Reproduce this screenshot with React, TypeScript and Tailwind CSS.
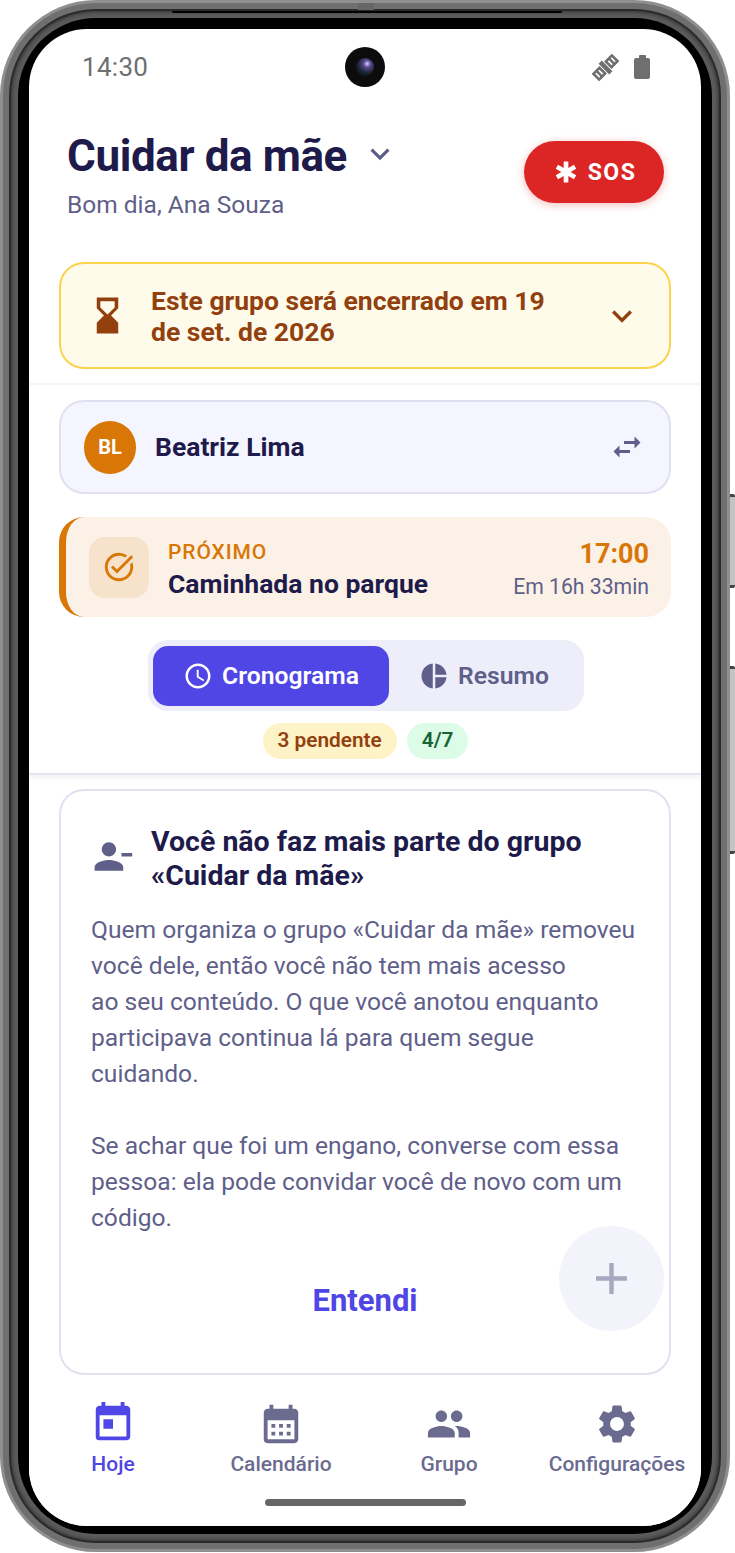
import {
  MdAccessTime,
  MdAdd,
  MdCalendarMonth,
  MdEmergency,
  MdHourglassBottom,
  MdKeyboardArrowDown,
  MdOutlineTaskAlt,
  MdPeople,
  MdPersonRemove,
  MdPieChart,
  MdSettings,
  MdSwapHoriz,
  MdToday,
} from "react-icons/md";

const navItems = [
  { label: "Calendário", icon: MdCalendarMonth },
  { label: "Grupo", icon: MdPeople },
  { label: "Configurações", icon: MdSettings },
];

function SatelliteIcon() {
  return (
    <svg width="27" height="27" viewBox="-13.5 -13.5 27 27" fill="none" stroke="#6f6f6f" strokeWidth="2.6">
      <g transform="rotate(-45)">
        <rect x="-13" y="-4" width="8.5" height="8" />
        <path d="M-8.8 -4V4" />
        <rect x="4.5" y="-4" width="8.5" height="8" />
        <path d="M8.8 -4V4" />
        <path d="M0 -7.5V7.5" strokeWidth="4.5" />
      </g>
    </svg>
  );
}

function StatusBar() {
  return (
    <div className="relative flex h-[76px] items-center justify-between pl-[53px] pr-[51px] text-[#6f6f6f]">
      <span className="text-[26px] leading-none tracking-[0.3px]">14:30</span>
      <div className="absolute left-[316px] top-[18px] flex h-[40px] w-[40px] items-center justify-center rounded-full bg-[#0c0c0c]">
        <div className="h-[18px] w-[18px] rounded-full bg-[radial-gradient(circle_at_62%_32%,#d8cfff_0%,#5a4690_22%,#1a2530_55%,#08090c_100%)]" />
      </div>
      <div className="flex items-center gap-[15px]">
        <SatelliteIcon />
        <div className="flex flex-col items-center">
          <div className="h-[3px] w-[7px] rounded-t-[1px] bg-[#6f6f6f]" />
          <div className="h-[21px] w-[16px] rounded-[2px] bg-[#6f6f6f]" />
        </div>
      </div>
    </div>
  );
}

function Header() {
  return (
    <div className="flex items-start justify-between pl-[38px] pr-[37px] pt-[25px]">
      <div>
        <div className="flex items-center gap-[14px]">
          <h1 className="text-[44px] font-bold leading-[52px] tracking-[-0.4px] text-[#1e1b4b]">
            Cuidar da mãe
          </h1>
          <MdKeyboardArrowDown size={38} className="-mt-[5px] text-[#5b5b8c]" />
        </div>
        <p className="mt-[8px] text-[24.5px] leading-[30px] text-[#5f5f8a]">Bom dia, Ana Souza</p>
      </div>
      <button className="mt-[11px] flex h-[62px] w-[140px] items-center justify-center gap-[8px] rounded-full bg-[#dc2626] text-white shadow-[0_2px_8px_rgba(220,38,38,0.3)]">
        <MdEmergency size={28} />
        <span className="pt-[3px] text-[23px] font-bold tracking-[1.5px]">SOS</span>
      </button>
    </div>
  );
}

function ClosingBanner() {
  return (
    <div className="mx-[30px] mt-[42px] flex h-[107px] items-center rounded-[25px] border-2 border-[#fcd34d] bg-[#fffbeb] pl-[25px] pr-[27px]">
      <MdHourglassBottom size={43} className="shrink-0 text-[#92400e]" />
      <p className="ml-[22px] flex-1 text-[26.5px] font-bold leading-[31px] text-[#92400e]">
        Este grupo será encerrado em 19
        <br />
        de set. de 2026
      </p>
      <MdKeyboardArrowDown size={40} className="shrink-0 text-[#92400e]" />
    </div>
  );
}

function PersonRow() {
  return (
    <div className="mx-[30px] mt-[15px] flex h-[94px] items-center rounded-[25px] border-2 border-[#e0e0f0] bg-[#f5f5ff] pl-[23px] pr-[24px]">
      <div className="flex h-[53px] w-[52px] items-center justify-center rounded-full bg-[#d97706] text-[20px] font-bold text-white">
        BL
      </div>
      <span className="ml-[19px] flex-1 text-[26.5px] font-bold text-[#1e1b4b]">Beatriz Lima</span>
      <MdSwapHoriz size={36} className="text-[#5f5f8a]" />
    </div>
  );
}

function NextUp() {
  return (
    <div className="mx-[30px] mt-[23px] flex h-[100px] items-center rounded-[25px] border-l-[7px] border-[#d97706] bg-[#fcf1e6] pl-[23px] pr-[22px]">
      <div className="flex h-[61px] w-[60px] items-center justify-center rounded-[16px] bg-[#f7e2cb]">
        <MdOutlineTaskAlt size={34} className="text-[#d97706]" />
      </div>
      <div className="ml-[19px] flex-1 pt-[4px]">
        <div className="text-[21px] font-medium leading-[26px] tracking-[0.9px] text-[#d97706]">PRÓXIMO</div>
        <div className="mt-[2px] text-[26.5px] font-bold leading-[33px] text-[#1e1b4b]">Caminhada no parque</div>
      </div>
      <div className="pt-[4px] text-right">
        <div className="text-[27px] font-bold leading-[34px] text-[#d97706]">17:00</div>
        <div className="mt-[2px] text-[21.2px] leading-[28px] text-[#5f5f8a]">Em 16h 33min</div>
      </div>
    </div>
  );
}

function Tabs() {
  return (
    <div className="ml-[119px] mt-[23px] flex h-[71px] w-[436px] items-center rounded-[20px] bg-[#eeeefa] p-[5px]">
      <div className="flex h-[60px] w-[236px] items-center justify-center gap-[9px] rounded-[15px] bg-[#4f46e5] text-white">
        <MdAccessTime size={30} />
        <span className="text-[24.7px] font-semibold">Cronograma</span>
      </div>
      <div className="flex h-[60px] flex-1 items-center justify-center gap-[9px] text-[#5f5f8a]">
        <MdPieChart size={30} />
        <span className="text-[24.7px] font-semibold">Resumo</span>
      </div>
    </div>
  );
}

function Pills() {
  return (
    <div className="mt-[12px] flex justify-center gap-[10px] pl-[1px]">
      <span className="flex h-[36px] items-center rounded-full bg-[#fef3c7] px-[15px] text-[20.8px] font-semibold text-[#92400e]">
        3 pendente
      </span>
      <span className="flex h-[36px] items-center rounded-full bg-[#dcfce7] px-[15px] text-[20.8px] font-semibold text-[#166534]">
        4/7
      </span>
    </div>
  );
}

function RemovedCard() {
  return (
    <div className="mx-[30px] mt-[14px] h-[586px] rounded-[25px] border-2 border-[#e0e0f0] bg-white pl-[30px] pr-[30px] pt-[34px]">
      <div className="flex items-center">
        <MdPersonRemove size={43} className="-mt-[5px] shrink-0 text-[#5f5f8a]" />
        <h2 className="ml-[17px] text-[28.5px] font-bold leading-[34px] text-[#1e1b4b]">
          Você não faz mais parte do grupo
          <br />
          «Cuidar da mãe»
        </h2>
      </div>
      <p className="mt-[19px] text-[24.6px] leading-[36px] text-[#5f5f8a]">
        Quem organiza o grupo «Cuidar da mãe» removeu
        <br />
        você dele, então você não tem mais acesso
        <br />
        ao seu conteúdo. O que você anotou enquanto
        <br />
        participava continua lá para quem segue
        <br />
        cuidando.
        <br />
        <br />
        Se achar que foi um engano, converse com essa
        <br />
        pessoa: ela pode convidar você de novo com um
        <br />
        código.
      </p>
      <div className="mt-[42px] text-center text-[31px] font-bold text-[#4f46e5]">Entendi</div>
    </div>
  );
}

function BottomNav() {
  return (
    <div className="relative h-[150px] shrink-0 bg-white">
      <div className="grid grid-cols-4 pt-[25px]">
        <div className="flex flex-col items-center">
          <MdToday size={46} className="-mt-[1px] text-[#4f46e5]" />
          <span className="mt-[3px] text-[21px] font-medium leading-[30px] text-[#4f46e5]">Hoje</span>
        </div>
        {navItems.map((item) => {
          const Icon = item.icon;
          return (
            <div key={item.label} className="flex flex-col items-center">
              <Icon size={46} className="text-[#6b6b90]" />
              <span className="mt-[2px] whitespace-nowrap text-[21px] font-medium leading-[30px] text-[#6b6b90]">
                {item.label}
              </span>
            </div>
          );
        })}
      </div>
      <div className="absolute bottom-[20px] left-[236px] h-[7px] w-[201px] rounded-full bg-[#666666]" />
    </div>
  );
}

export default function App() {
  return (
    <div className="relative h-[1553px] w-[735px] overflow-hidden bg-white font-['Roboto',sans-serif]">
      {/* side buttons */}
      <div className="absolute left-[730px] top-[494px] h-[94px] w-[5px] rounded-r-[2px] border-y-[3px] border-[#444444] bg-[#c4c4c4]" />
      <div className="absolute left-[730px] top-[666px] h-[188px] w-[5px] rounded-r-[2px] border-y-[3px] border-[#444444] bg-[#c4c4c4]" />

      {/* phone frame */}
      <div className="absolute left-0 top-0 h-[1552px] w-[730px] rounded-[96px] bg-[#8f8f8f] p-[3px]">
        <div className="h-full w-full rounded-[93px] bg-[#6f6f6f] p-[6px]">
          <div className="h-full w-full rounded-[87px] bg-[#2a2a2a] p-[2px]">
            <div className="h-full w-full rounded-[85px] bg-[#5c5c5c] p-[7px] shadow-[inset_0_0_5px_#222222]">
              <div className="h-full w-full rounded-[78px] bg-black px-[11px] pb-[8px] pt-[11px]">
                <div className="flex h-full w-full flex-col overflow-hidden rounded-[58px] bg-white">
                  <StatusBar />
                  <Header />
                  <ClosingBanner />
                  <div className="mt-[14px] h-[2px] bg-[#f5f5f8]" />
                  <PersonRow />
                  <NextUp />
                  <Tabs />
                  <Pills />
                  <div className="mt-[14px] h-[2px] bg-[#e4e4ec] shadow-[0_2px_4px_rgba(30,27,75,0.12)]" />
                  <div className="min-h-0 flex-1 overflow-hidden">
                    <RemovedCard />
                  </div>
                  <BottomNav />
                </div>
              </div>
            </div>
          </div>
        </div>
      </div>

      {/* speaker slit and top nub on the frame */}
      <div className="absolute left-[172px] top-[11px] h-[2px] w-[390px] rounded-full bg-black" />
      <div className="absolute left-[358px] top-[3px] h-[7px] w-[16px] bg-[#666666]" />

      {/* FAB over the content */}
      <div className="absolute left-[559px] top-[1226px] flex h-[105px] w-[105px] items-center justify-center rounded-full bg-[#f3f3fb]">
        <MdAdd size={53} className="text-[#a8a8c0]" />
      </div>
    </div>
  );
}
